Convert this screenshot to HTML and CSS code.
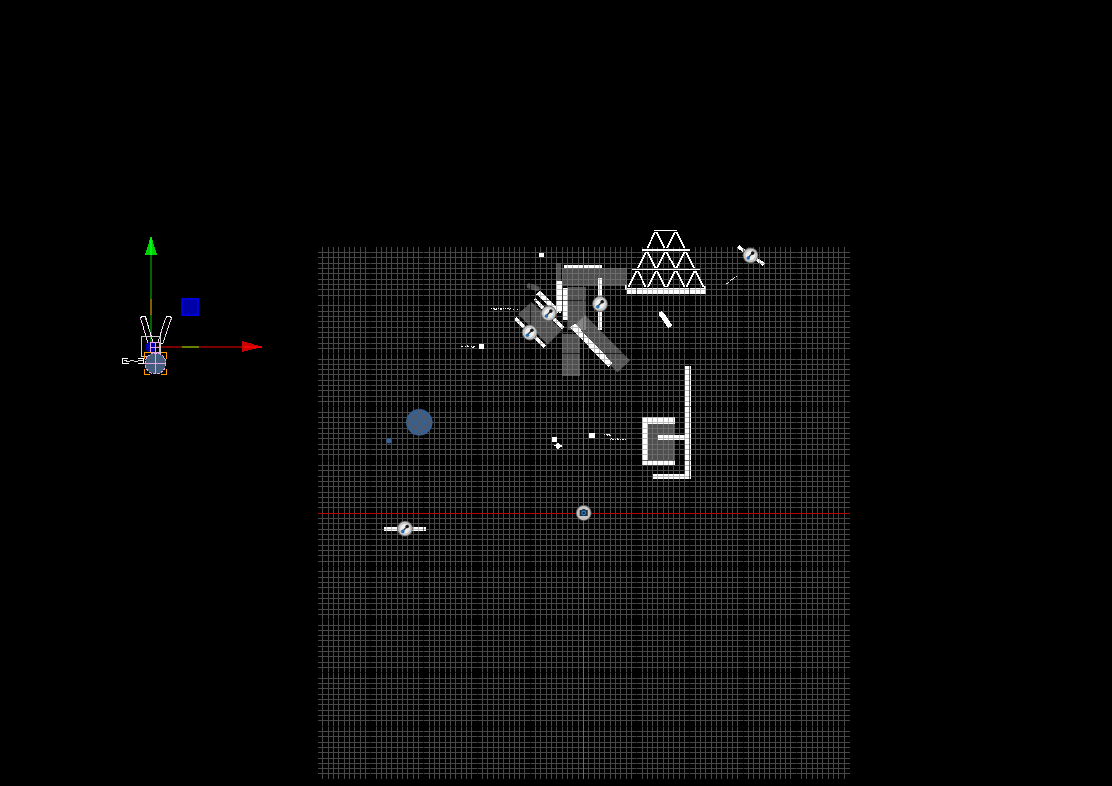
FILE: index.html
```
<!DOCTYPE html>
<html lang="en">
<head>
<meta charset="utf-8">
<title>Scene view</title>
<link rel="stylesheet" href="styles.css">
</head>
<body>
<svg class="viewport" width="1112" height="786" viewBox="0 0 1112 786">
  <defs>
    <pattern id="checker" x="417" y="420" width="10" height="10" patternUnits="userSpaceOnUse">
      <rect class="ball" width="10" height="10"/>
      <path class="check" d="M0 0h5v5H0zM5 5h5v5H5z"/>
    </pattern>
    <g id="joint">
      <circle class="rim" r="7.9"/>
      <circle class="disc" r="6.9"/>
      <circle class="core" r="4.8"/>
      <path class="bone" d="M-2 2L2-2"/>
      <circle class="knob" cx="2.2" cy="-2.2" r="1.8"/>
      <circle class="anchor" cx="-2.2" cy="2.7" r="1.8"/>
    </g>
  </defs>

  <!-- translucent panels -->
  <g class="panel">
    <path d="M562 268h65v18h-65zM562 334h18v42h-18zM556 263h5v18h-5zM648 424h27v36h-27z"/>
    <path d="M568 287h18v43h-18z"/>
    <path d="M585 315L630 360.5L617.5 372.5L573 327z"/>
    <path d="M531.5 302L562 330L547.5 344.5L518 314z"/>
  </g>
  <path class="slug" d="M529.5 286L537 288.5"/>

  <!-- solid bodies -->
  <g class="solid">
    <path d="M564 265h38v3h-38zM556 281h6v29l-2 4l-4-4zM563 288h5v32h-5zM598 278h4v52h-4z"/>
    <path d="M384 527h42v4h-42z"/>
    <path d="M685 366h6v113h-38v-5h32v-34h-27v-5h27z"/>
    <path d="M642 417h33v7h-27v36h27v5h-33z"/>
    <path d="M627 288h77v-2h2v8h-79v-4h-2v-5h2z"/>
  </g>
  <g class="bar">
    <path class="w5" d="M538 292.5L558.5 312"/>
    <path class="w3" d="M534.5 299L563.5 328.5M515.5 318.5L545 347M738 246.500L764 264.500"/>
    <path class="w6" d="M572.500 325.500L610.500 365"/>
  </g>

  <path id="grid" class="grid"/>
  <path id="major" class="major"/>
  <path class="axis-x" d="M318 513.500h532"/>
  <path class="axis-y" d="M583.500 247v532"/>

  <circle cx="419.300" cy="422.300" r="13" fill="url(#checker)" class="outline"/>
  <circle cx="389" cy="440.700" r="2.700" class="ball"/>

  <g class="solid">
    <path d="M539 253h5v4h-5zM552 437h5v5h-5zM589 433h6v5h-6zM479 344h5v5h-5z"/>
    <path d="M557 443h2v1h1v1h2v2h-2v1h-1v1h-2v-1h-1v-2h-2v-1h2v-1h1z"/>
  </g>
  <path class="capsule" d="M661.500 314L669 325"/>

  <!-- card tower -->
  <g class="tower">
    <path d="M654 230.500h23M632 269.500h68"/>
    <path class="w2" d="M642 250h48"/>
    <path class="w15" d="M655 232L647.500 248M656.500 232L664.500 248M675 232L667 248M676.500 232L684.500 248
      M646 252L638 268M647.500 252L655.500 268M665 252L657 268M666.500 252L675 268M684.500 252L676.500 268M686 252L694 268
      M636.500 271L628.500 287M638 271L645.500 287M656 271L648 287M657 271L665 287M675 271L667 287M676.500 271L684.500 287M694.500 271L686.500 287M695.500 271L703.500 287"/>
  </g>

  <!-- small debris -->
  <g class="debris">
    <path stroke-dasharray="1 1 2 1 1 1" d="M491 308.500h20"/>
    <path stroke-dasharray="1 3" d="M509 309.500h9"/>
    <path stroke-dasharray="2 2 1 1" d="M461 346.500h16"/>
    <path stroke-dasharray="1 1 4 1" d="M604 434.500h6"/>
    <path stroke-dasharray="1 1 2 1" d="M607 435.500h4M610 439.500h17"/>
    <path d="M611 438.500h1M617 438.500h1M494 309.500h3M500 309.500h2M467 345.500h1M472 347.500h2"/>
    <path d="M726 283.500h2M728 282.500h1M730 280.500h1M731 279.500h2M733 278.500h1M734 277.500h1M736 276.500h1"/>
  </g>

  <!-- joint and camera markers -->
  <use href="#joint" x="600" y="304"/>
  <use href="#joint" x="548.700" y="313.300"/>
  <use href="#joint" x="529.700" y="332.500"/>
  <use href="#joint" x="750.500" y="255.300"/>
  <use href="#joint" x="405" y="528.700"/>
  <g transform="translate(583.700 513)">
    <circle class="rim" r="7.900"/>
    <circle class="disc" r="6.900"/>
    <path class="camera" d="M-4-3h2l1-1h2l1 1h2v6h-8z"/>
    <circle class="lens" r="1.800"/>
  </g>

  <!-- selected figure and translation gizmo -->
  <g class="gizmo">
    <path class="y-shaft" d="M151 255v92"/>
    <path class="y-mid" d="M151 299v16"/>
    <path class="y-head" d="M151 235.500l6 19.500h-12z"/>
    <path class="y-shine" d="M151 238v17"/>
    <path class="x-shaft" d="M157 347h86"/>
    <path class="x-mid" d="M182 347h17"/>
    <path class="x-head" d="M242 341l20.500 5.800l-20.500 5.200z"/>
    <path class="x-shine" d="M243 347h19"/>
    <rect class="plane" x="182" y="299" width="16" height="16"/>
  </g>
  <g class="figure">
    <path class="arm" d="M140.500 318l1.500-1.500h3l1 2L153 342M140.500 318L148 343M171.500 318l-1.500-1.500h-3l-1.500 2L158 342M171.500 318L163 343h-4"/>
    <path class="arm-tint" d="M145.500 318L153 342M140.500 318L148 343M165.500 318.500L158 342M171.500 318L163 343"/>
    <circle class="z-head" cx="151" cy="347" r="5.500"/>
    <rect class="frame" x="141.500" y="336.500" width="19" height="20"/>
    <circle class="body" cx="155.500" cy="363.500" r="10.500"/>
    <rect class="neck" x="150.500" y="342.500" width="9" height="10"/>
    <path class="cross" d="M155.500 342.500v31.500M145 363.500h21M150.500 347.500h9"/>
    <path class="corners" d="M144.500 359v-6.500h6M161 352.500h5.500v6M166.500 369v5.500h-6M150 374.500h-5.500v-6"/>
    <path class="hand" d="M128 358.500h-5.500v5h6M138 358.500h5.500v5h-6"/>
    <path class="finger" d="M124 360.500h3M127 361.500h3M130 360.500h4M134 361.500h4M138 360.500h5M126 361.500h1"/>
  </g>
</svg>
<script src="grid.js"></script>
</body>
</html>
```
FILE: styles.css
```
body { margin: 0; background: #000; overflow: hidden; }
.viewport { display: block; background: #000; }
.panel { fill: rgba(255, 255, 255, .31); }
.slug { stroke: #4c4c4c; stroke-width: 5.4; stroke-linecap: round; }
.solid { fill: #fff; shape-rendering: crispEdges; }
.bar { stroke: #fff; fill: none; shape-rendering: crispEdges; }
.w2 { stroke-width: 2; }
.w15 { stroke-width: 1.7; }
.w3 { stroke-width: 3.4; }
.w5 { stroke-width: 5; }
.w6 { stroke-width: 6; }
.capsule { stroke: #fff; stroke-width: 5; stroke-linecap: round; shape-rendering: crispEdges; }
.tower { stroke: #fff; fill: none; shape-rendering: crispEdges; }
.debris { stroke: #eee; fill: none; shape-rendering: crispEdges; }
.ball { fill: #365f92; }
.check { fill: #4e5b6e; }
.outline { stroke: #37608f; stroke-width: .8; }
.grid { fill: none; stroke: rgba(136, 136, 136, .52); shape-rendering: crispEdges; }
.major { fill: none; stroke: rgba(0, 0, 0, .6); shape-rendering: crispEdges; }
.axis-x { stroke: #b40000; shape-rendering: crispEdges; }
.axis-y { stroke: #00b400; shape-rendering: crispEdges; }
.rim { fill: #666; }
.disc { fill: #c4c4c4; }
.core { fill: #eee; }
.bone { stroke: #333; stroke-width: 1.3; }
.knob { fill: #151515; }
.anchor { fill: #2871b4; }
.camera { fill: #252d35; }
.lens { fill: #102438; stroke: #2385d6; stroke-width: 1.2; }
.gizmo path, .figure path, .figure rect { fill: none; }
.gizmo path { stroke-width: 2; shape-rendering: crispEdges; }
.y-shaft { stroke: #006400; }
.y-mid { stroke: #806000; }
.gizmo .y-head { fill: #00d200; }
.y-shine { stroke: #00f51c; }
.x-shaft { stroke: #780000; }
.x-mid { stroke: #688000; }
.gizmo .x-head { fill: #c80000; }
.x-shine { stroke: #f00000; }
.plane { fill: #0000a8; stroke: #0000d8; stroke-width: 2; }
.figure { shape-rendering: crispEdges; }
.arm { stroke: #fff; }
.arm-tint { stroke: #e3a6e3; stroke-dasharray: 3 3; }
.z-head { fill: #0000b4; }
.frame { stroke: #ccc; }
.body { fill: #445d7c; stroke: #e3a6e3; stroke-dasharray: 3 1; }
.neck { stroke: #e3a6e3; }
.cross { stroke: #e3a6e3; }
.corners { stroke: #f90; }
.hand { stroke: #fff; }
.finger { stroke: #ddd; }
```
FILE: grid.js
```
const step = 5.32;
let minor = "";
let major = "";
for (let k = -49; k <= 49; k++) {
  if (k === 0) continue;
  const x = Math.floor(583.5 + k * step) + 0.5;
  const y = Math.floor(513.3 + k * step) + 0.5;
  const line = `M${x} 247V779M318 ${y}H850`;
  if (k % 10 === 0) major += line;
  else minor += line;
}
document.getElementById("grid").setAttribute("d", minor);
document.getElementById("major").setAttribute("d", major);
```
